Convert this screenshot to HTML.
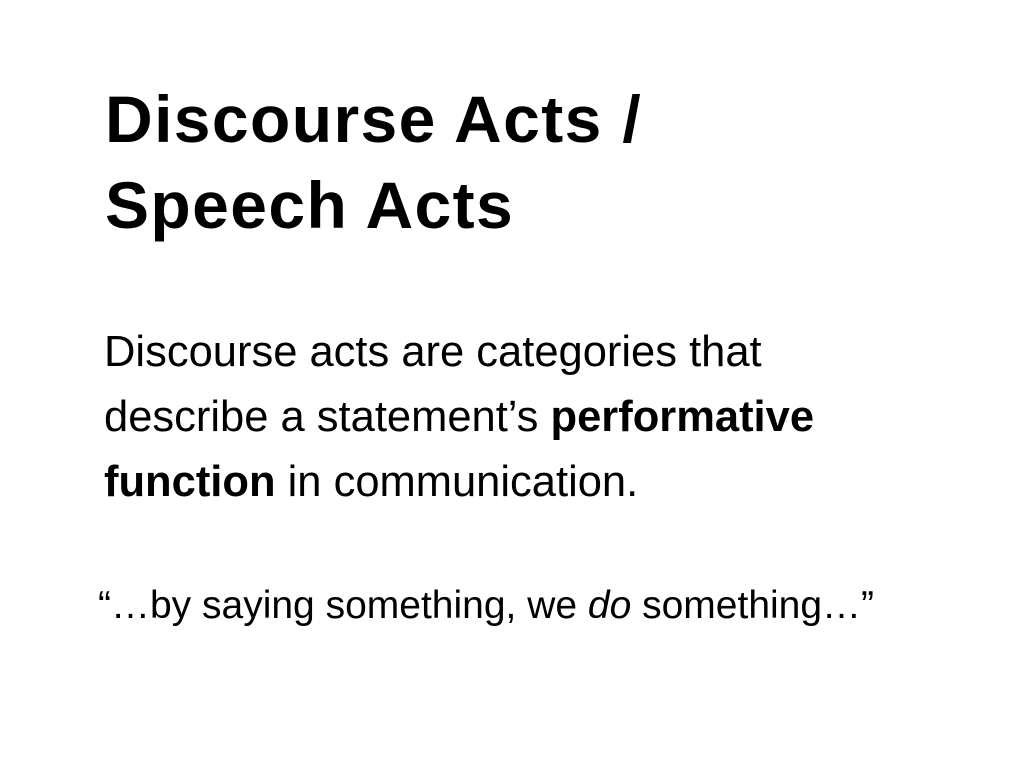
<!DOCTYPE html>
<html><head><meta charset="utf-8"><style>
html,body{margin:0;padding:0;background:#fff;width:1024px;height:768px;overflow:hidden}
.t{position:absolute;left:105px;top:76px;font-family:"Liberation Sans",sans-serif;font-weight:bold;font-size:66px;line-height:86px;color:#000;letter-spacing:1.4px}
.b{position:absolute;left:104px;top:320px;font-family:"Liberation Sans",sans-serif;font-size:43.5px;line-height:65px;color:#000}
.q{position:absolute;left:98px;top:583px;font-family:"Liberation Sans",sans-serif;font-size:39px;line-height:46px;color:#000}
</style></head><body>
<div class="t">Discourse Acts /<br>Speech Acts</div>
<div class="b">Discourse acts are categories that<br>describe a statement’s <b>performative</b><br><b>function</b> in communication.</div>
<div class="q">“…by saying something, we <i>do</i> something…”</div>
</body></html>
